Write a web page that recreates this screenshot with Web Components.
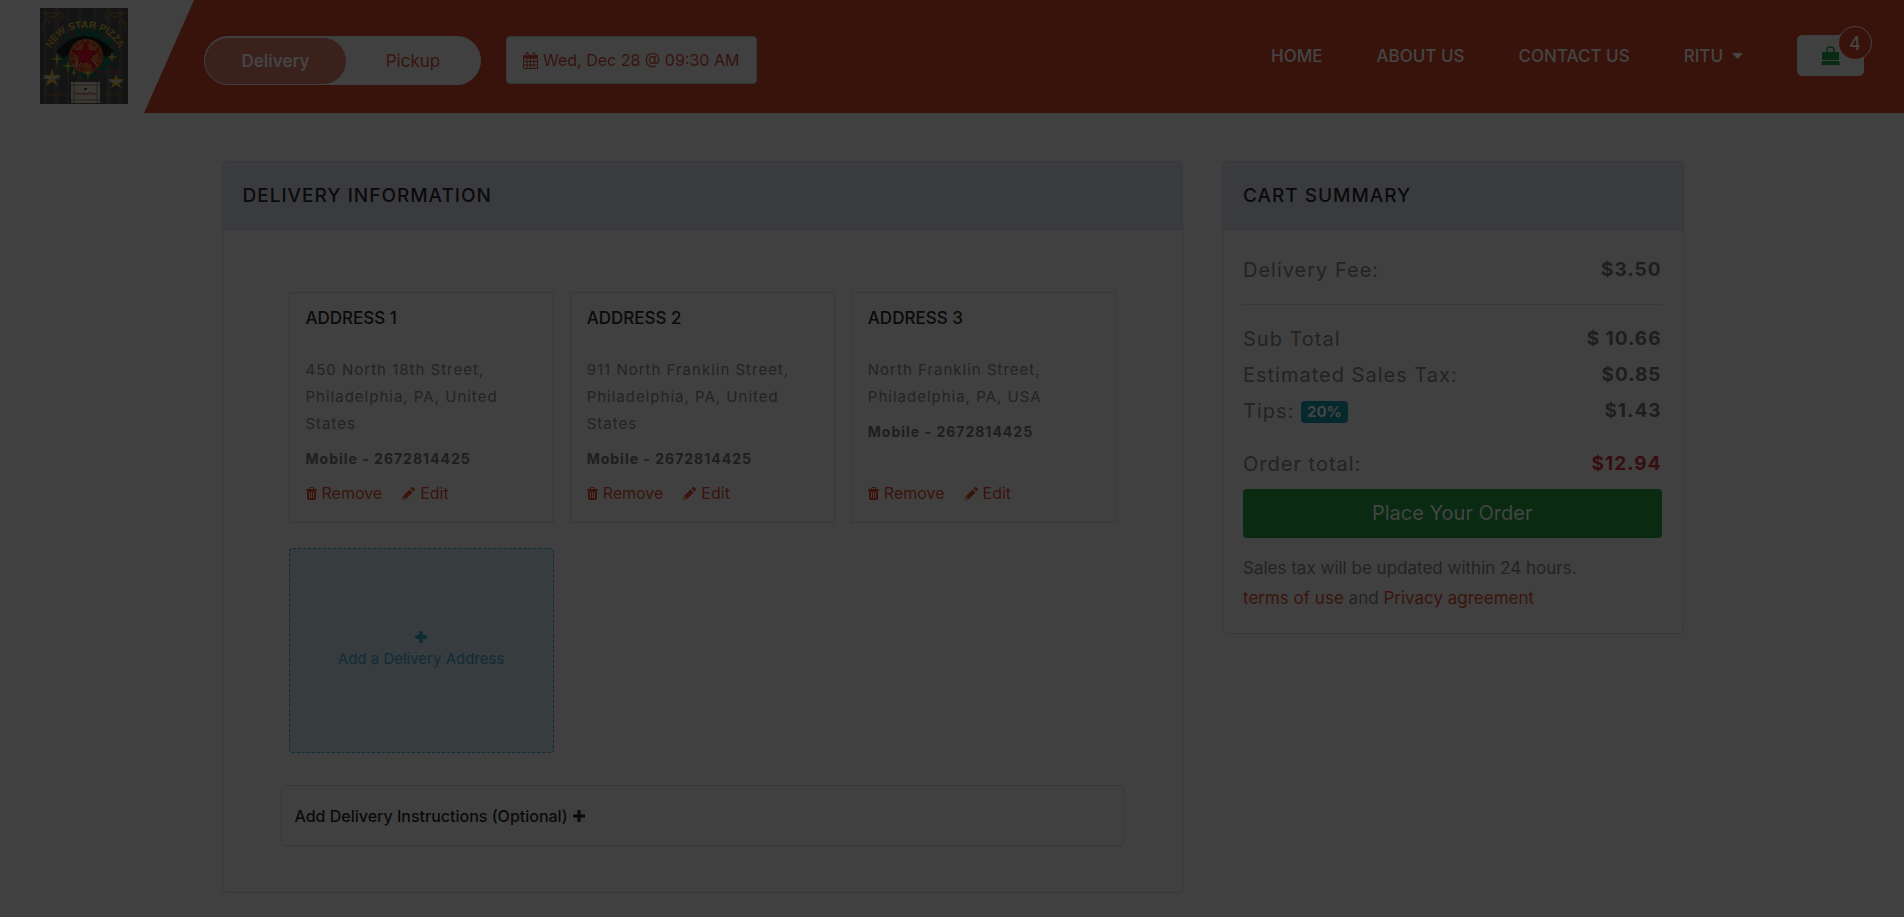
<!DOCTYPE html>
<html lang="en">
<head>
<meta charset="utf-8">
<meta name="viewport" content="width=device-width, initial-scale=1">
<title>New Star Pizza - Checkout</title>
<style>
  :root {
    --page: #404040;
    --brand: #38130c;
    --line: #383838;
    --head: #3a3b3f;
    --ink: #0a0a0a;
    --text: #232323;
    --strong: #1e1e1e;
    --link: #3a140c;
    --green: #0a2a11;
  }
  body {
    margin: 0;
    min-height: 100vh;
    background: var(--page);
    color: var(--text);
    font-family: Inter, "Open Sans", sans-serif;
    font-size: 16px;
  }
</style>
</head>
<body>
<checkout-page></checkout-page>

<script>
const define = (name, html) => {
  const template = document.createElement('template');
  template.innerHTML = html;
  customElements.define(name, class extends HTMLElement {
    constructor() {
      super();
      this.attachShadow({ mode: 'open' }).append(template.content.cloneNode(true));
    }
  });
};

define('shop-logo', `
  <style>
    :host { display: block; width: 88px; height: 96px; }
    a, svg { display: block; }
    text { font-family: "Liberation Sans", sans-serif; }
  </style>
  <a href="#" aria-label="New Star Pizza">
  <svg width="88" height="96" viewBox="0 0 88 96">
    <defs>
      <linearGradient id="gold" x1="0" y1="0" x2="0" y2="1">
        <stop offset="0" stop-color="#403411"/><stop offset="1" stop-color="#33260a"/>
      </linearGradient>
      <path id="arch" d="M10 43 Q20 20 45 20 Q70 20 80 43"/>
    </defs>
    <rect width="88" height="96" fill="#141414"/>
    <g fill="#181818">
      <rect x="4" width="3" height="96"/><rect x="14" width="5" height="96"/><rect x="27" width="2" height="96"/>
      <rect x="38" width="4" height="96"/><rect x="53" width="3" height="96"/><rect x="66" width="5" height="96"/><rect x="79" width="3" height="96"/>
    </g>
    <g fill="none" stroke="#2e230b" stroke-width="1">
      <path d="M3 22q-1-8 3-11q5 1 2 5M3 5h14q6-1 6 4q-2 3-4 0M5 4q2 5 7 5t5-3"/>
      <path d="M85 22q1-8-3-11q-5 1-2 5M85 5H71q-6-1-6 4q2 3 4 0M83 4q-2 5-7 5t-5-3"/>
    </g>
    <path fill="#061b14" d="M44 24l8-18 1 20 12-13-4 20 15-5-9 14 13 3-12 5 9 8-12-1 4 9-11-4-2 10-7-8-5 9-4-9-9 5 1-9-13 3 8-9-16-1 13-6-9-9 14 1-6-15 14 9-4-20 12 14z"/>
    <path fill="#070707" d="M16 43q29-30 58 0l-7 7q-20-16-44 0z"/>
    <circle cx="46" cy="48" r="17" fill="#3a1d0b"/>
    <circle cx="46" cy="48" r="14" fill="none" stroke="#32110b" stroke-width="4" stroke-dasharray="4 2"/>
    <path fill="#3d050b" stroke="#29060a" d="M46 34l3 9 10 0-8 6 4 10-9-6-9 6 3-10-8-6 10 0z"/>
    <path d="M38 53l-2 6 6-4M51 51l6 6" stroke="#3d3937" fill="none"/>
    <g fill="#373011">
      <path d="M17 44l1 6 5 1-5 1-1 6-1-6-5-1 5-1zM28 51l1 6 6 1-6 1-1 7-1-7-6-1 6-1zM48 58l1 6 5 1-5 1-1 7-1-7-5-1 5-1zM72 43l1 5 5 1-5 1-1 5-1-5-5-1 5-1zM34 60l1 4 3 0-3 1-1 4-1-4-3-1 3 0z"/>
      <path d="M12 60l2 7h7l-6 4 3 7-6-4-6 4 2-7-5-4h7zM76 66l2 5h6l-5 4 2 5-5-3-5 3 2-5-5-4h6z"/>
    </g>
    <text font-size="10" font-weight="700" fill="url(#gold)"><textPath href="#arch" startOffset="50%" text-anchor="middle">NEW STAR PIZZA</textPath></text>
    <g font-weight="700" text-anchor="middle">
      <text x="12" y="71" font-size="4" fill="#3b3b3b">WALNUT</text>
      <text x="76" y="75" font-size="4" fill="#3b3b3b">FRONT</text>
      <text x="69" y="65" font-size="4" fill="#38101b">Salads, Subs</text>
      <text x="16" y="88" font-size="5" fill="#292108" font-weight="400">Strawberry</text>
      <text x="73" y="88" font-size="5" fill="#292108" font-weight="400">Center</text>
    </g>
    <rect x="31" y="74" width="29" height="21" fill="#3b3832"/>
    <path d="M34 74v21M57 74v21M31 77h29M31 92h29" stroke="#242321" stroke-width="1"/>
    <text x="46" y="87" font-size="3" font-weight="700" text-anchor="middle" fill="#360c0d">New Star Pizza</text>
    <rect x="44" y="80" width="3" height="2" fill="#151515"/>
  </svg></a>`);

define('mode-toggle', `
  <style>
    :host { display: block; }
    div { display: flex; box-sizing: border-box; height: 49px; padding: 2px 1px 1px; border-radius: 25px; background: #404040; }
    label { display: flex; align-items: center; justify-content: center; position: relative; width: 141px; border-radius: 24px; color: #3a140c; font-size: 17px; cursor: pointer; }
    label + label { width: 134px; }
    label:has(:checked) { background: #3b211b; color: #454545; font-weight: 600; }
    input { position: absolute; inset: 0; width: 100%; height: 100%; margin: 0; opacity: 0; }
  </style>
  <div role="radiogroup" aria-label="Order type">
    <label><input type="radio" name="mode" checked>Delivery</label>
    <label><input type="radio" name="mode">Pickup</label>
  </div>`);

define('date-button', `
  <style>
    :host { display: block; }
    button { display: flex; align-items: center; gap: 5px; box-sizing: border-box; height: 48px; padding: 0 17px 0 16px; border: 1px solid #313a3c; border-radius: 4px; background: #404040; color: #38130c; font: inherit; font-size: 16px; white-space: nowrap; }
  </style>
  <button type="button">
    <svg width="15" height="17" viewBox="0 0 15 17" fill="none" stroke="currentColor">
      <path d="M.5 3.5h14v13H.5z"/><path d="M1 4h13v2H1z" fill="currentColor"/>
      <path d="M.5 9.5h14M.5 13h14M4 6v10M7.500 6v10M11 6v10"/>
      <rect x="3" y=".5" width="2" height="4" rx="1" fill="#404040"/><rect x="10" y=".5" width="2" height="4" rx="1" fill="#404040"/>
    </svg><slot></slot></button>`);

define('main-nav', `
  <style>
    :host { display: block; }
    nav { display: flex; align-items: center; gap: 54px; height: 41px; }
    a, button { color: #454545; font: inherit; font-size: 17px; font-weight: 500; line-height: 24px; text-decoration: none; white-space: nowrap; }
    button { display: flex; align-items: center; gap: 9px; padding: 0; border: 0; background: none; }
  </style>
  <nav aria-label="Main">
    <a href="#">HOME</a><a href="#">ABOUT US</a><a href="#">CONTACT US</a>
    <button type="button" aria-haspopup="true">RITU <svg width="11" height="6" viewBox="0 0 11 6"><path d="M0 0h11L5.500 6z" fill="currentColor"/></svg></button>
  </nav>`);

define('cart-button', `
  <style>
    :host { display: block; position: relative; }
    button { display: flex; align-items: center; box-sizing: border-box; width: 67px; height: 41px; padding: 0 24px; border: 0; border-radius: 5px; background: #404040; color: #0a2a11; }
    span { position: absolute; top: -9px; right: -8px; display: flex; align-items: center; justify-content: center; box-sizing: border-box; width: 34px; height: 34px; border: 1px solid #484341; border-radius: 50%; background: #38130c; color: #454545; font-size: 18px; font-weight: 500; }
  </style>
  <button type="button" aria-label="Cart">
    <svg width="19" height="19" viewBox="0 0 19 19"><path fill="currentColor" d="M1 6h17v8H1zM1 15h17l1 4H0z"/><path d="M6 9V4q0-3 3.500-3T13 4v5" fill="none" stroke="currentColor" stroke-width="1.500"/></svg>
  </button><span><slot></slot></span>`);

define('site-header', `
  <style>
    :host { display: block; }
    header { display: flex; }
    shop-logo { margin: 8px 16px 9px 40px; }
    .bar { flex: 1; display: flex; align-items: flex-start; gap: 25px; padding: 35px 40px 28px 60px; background: var(--brand); clip-path: polygon(50px 0, 100% 0, 100% 100%, 0 100%); }
    mode-toggle, date-button { margin-top: 1px; }
    main-nav { margin-left: auto; margin-right: 29px; }
  </style>
  <header>
    <shop-logo></shop-logo>
    <div class="bar">
      <mode-toggle></mode-toggle>
      <date-button>Wed, Dec 28 @ 09:30 AM</date-button>
      <main-nav></main-nav>
      <cart-button>4</cart-button>
    </div>
  </header>`);

define('panel-card', `
  <style>
    :host { display: block; border: 1px solid var(--line); border-radius: 4px; }
    h2 { margin: 0; padding: 20px; border-bottom: 1px solid #36373a; background: var(--head); color: var(--ink); font-size: 19px; font-weight: 500; line-height: 27px; letter-spacing: 1px; }
  </style>
  <section><h2><slot name="title"></slot></h2><slot></slot></section>`);

define('address-card', `
  <style>
    :host { display: flex; flex-direction: column; padding: 13px 16px 15px; border: 1px solid var(--line); font-size: 15px; line-height: 27px; }
    h3 { margin: 0 0 26px; color: var(--ink); font-size: 17px; font-weight: 500; line-height: 24px; }
    p { margin: 0 0 8px; letter-spacing: 1px; }
    strong { color: var(--strong); font-size: 14px; letter-spacing: 1px; }
    div { display: flex; gap: 20px; margin-top: auto; padding-top: 8px; }
    a { display: flex; align-items: center; gap: 5px; color: var(--link); text-decoration: none; font-size: 16px; }
  </style>
  <h3><slot name="title"></slot></h3>
  <p><slot></slot></p>
  <strong>Mobile - <slot name="phone"></slot></strong>
  <div>
    <a href="#"><svg width="11" height="13" viewBox="0 0 11 13" fill="currentColor"><path fill-rule="evenodd" d="M3 2V1l1-1h3l1 1v1h3v1.500h-1V12l-1 1H2l-1-1V3.500H0V2zM4 1v1h3V1zM3 5v6h1V5zM5 5v6h1V5zM7 5v6h1V5z"/></svg>Remove</a>
    <a href="#"><svg width="13" height="13" viewBox="0 0 13 13" fill="currentColor"><path fill-rule="evenodd" d="M0 13l1-4 6.500-6.500 3 3L4 12zM8.500 1.500L10 0h1l2 2v1l-1.500 1.500zM1.500 10L1 12l2-.5v-1H2z"/></svg>Edit</a>
  </div>`);

define('add-address', `
  <style>
    :host { display: flex; }
    button { flex: 1; display: flex; flex-direction: column; align-items: center; justify-content: center; gap: 4px; min-height: 205px; padding: 0; border: 1px dashed #0d2d37; border-radius: 4px; background: #373c3e; color: #102c37; font: inherit; font-size: 15px; line-height: 24px; }
  </style>
  <button type="button"><svg width="12" height="12" viewBox="0 0 12 12"><path fill="currentColor" d="M4 1l1-1h2l1 1v3h3l1 1v2l-1 1H8v3l-1 1H5l-1-1V8H1L0 7V5l1-1h3z"/></svg><slot></slot></button>`);

define('instructions-box', `
  <style>
    :host { display: block; border: 1px solid var(--line); border-radius: 4px; }
    button { display: flex; align-items: center; gap: 5px; width: 100%; padding: 18px 13px 17px; border: 0; background: none; color: var(--ink); font: inherit; font-size: 16px; font-weight: 500; line-height: 24px; text-align: left; }
  </style>
  <button type="button" aria-expanded="false"><slot></slot><svg width="12" height="12" viewBox="0 0 12 12"><path fill="currentColor" d="M4.500 0h3v4.500H12v3H7.500V12h-3V7.500H0v-3h4.500z"/></svg></button>`);

define('summary-row', `
  <style>
    :host { display: flex; justify-content: space-between; font-size: 20px; line-height: 36px; letter-spacing: 1px; }
    strong { color: var(--amount, var(--strong)); font-size: 19px; font-weight: 700; }
  </style>
  <span><slot></slot></span><strong><slot name="amount"></slot></strong>`);

define('tip-badge', `
  <style>
    :host { display: inline-block; padding: 0 6px; border-radius: 4px; background: #06292e; color: #454545; font-size: 15px; font-weight: 700; line-height: 22px; letter-spacing: 0; vertical-align: 1px; }
  </style><slot></slot>`);

define('cart-summary', `
  <style>
    :host { display: block; padding: 22px 21px 20px 20px; }
    hr { margin: 16px 0; border: 0; border-top: 1px solid var(--line); }
    .total { margin-top: 17px; --amount: #370d11; }
    button { display: block; width: 100%; height: 49px; margin: 7px 0 15px; padding: 0 0 2px; border: 0; border-radius: 4px; background: var(--green); color: #454545; font: inherit; font-size: 20px; }
    p { margin: 0; font-size: 17px; line-height: 30px; }
    a { color: var(--link); text-decoration: none; }
  </style>
  <summary-row>Delivery Fee:<span slot="amount">$3.50</span></summary-row>
  <hr>
  <summary-row>Sub Total<span slot="amount">$ 10.66</span></summary-row>
  <summary-row>Estimated Sales Tax:<span slot="amount">$0.85</span></summary-row>
  <summary-row>Tips: <tip-badge>20%</tip-badge><span slot="amount">$1.43</span></summary-row>
  <summary-row class="total">Order total:<span slot="amount">$12.94</span></summary-row>
  <button type="button">Place Your Order</button>
  <p>Sales tax will be updated within 24 hours.</p>
  <p><a href="#">terms of use</a> and <a href="#">Privacy agreement</a></p>`);

define('delivery-info', `
  <style>
    :host { display: block; padding: 62px 58px 46px; }
    .grid { display: grid; grid-template-columns: repeat(auto-fill, minmax(240px, 1fr)); gap: 25px 16px; margin: 0 8px 32px; }
  </style>
  <div class="grid">
    <address-card><span slot="title">ADDRESS 1</span>450 North 18th Street, Philadelphia, PA, United States<span slot="phone">2672814425</span></address-card>
    <address-card><span slot="title">ADDRESS 2</span>911 North Franklin Street, Philadelphia, PA, United States<span slot="phone">2672814425</span></address-card>
    <address-card><span slot="title">ADDRESS 3</span>North Franklin Street, Philadelphia, PA, USA<span slot="phone">2672814425</span></address-card>
    <add-address>Add a Delivery Address</add-address>
  </div>
  <instructions-box>Add Delivery Instructions (Optional)</instructions-box>`);

define('checkout-page', `
  <style>
    :host { display: block; }
    main { display: grid; grid-template-columns: 25fr 12fr; align-items: start; gap: 39px; box-sizing: border-box; max-width: 1463px; margin: 0 auto; padding: 48px 0 22px 1px; }
    @media (max-width: 1100px) { main { grid-template-columns: 1fr; } }
  </style>
  <site-header></site-header>
  <main>
    <panel-card><span slot="title">DELIVERY INFORMATION</span><delivery-info></delivery-info></panel-card>
    <panel-card><span slot="title">CART SUMMARY</span><cart-summary></cart-summary></panel-card>
  </main>`);
</script>
</body>
</html>
